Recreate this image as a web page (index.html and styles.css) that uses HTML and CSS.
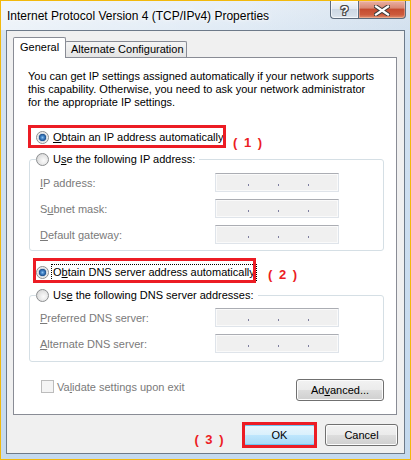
FILE: index.html
```html
<!DOCTYPE html>
<html>
<head>
<meta charset="utf-8">
<link rel="stylesheet" href="styles.css">
</head>
<body>
<div class="window">
  <div class="titlebar">
    <span class="title">Internet Protocol Version 4 (TCP/IPv4) Properties</span>
    <div class="caption">
      <div class="cbtn help"><span class="qmark">?</span></div>
      <div class="cbtn close">
        <svg width="16" height="11" viewBox="0 0 16 11">
          <path d="M2 1.5 L14 9.5 M14 1.5 L2 9.5" stroke="#3b3b3b" stroke-width="4.2" stroke-linecap="square" fill="none"/>
          <path d="M2 1.5 L14 9.5 M14 1.5 L2 9.5" stroke="#ffffff" stroke-width="2.2" stroke-linecap="square" fill="none"/>
        </svg>
      </div>
    </div>
  </div>
  <div class="client">
    <div class="tabs">
      <div class="tab active">General</div>
      <div class="tab inactive">Alternate Configuration</div>
    </div>
    <div class="panel">
      <p class="desc">You can get IP settings assigned automatically if your network supports<br>this capability. Otherwise, you need to ask your network administrator<br>for the appropriate IP settings.</p>

      <div class="opt opt1">
        <span class="radio on"></span>
        <span class="lbl"><u>O</u>btain an IP address automatically</span>
        <span class="mark mark1"></span>
        <span class="note note1">( 1 )</span>
      </div>

      <fieldset class="group group1">
        <legend><span class="radio"></span><span class="lbl">U<u>s</u>e the following IP address:</span></legend>
        <div class="frow"><span class="flabel"><u>I</u>P address:</span><span class="ipfield"><i></i><i></i><i></i></span></div>
        <div class="frow"><span class="flabel">S<u>u</u>bnet mask:</span><span class="ipfield"><i></i><i></i><i></i></span></div>
        <div class="frow"><span class="flabel"><u>D</u>efault gateway:</span><span class="ipfield"><i></i><i></i><i></i></span></div>
      </fieldset>

      <div class="opt opt2">
        <span class="radio on"></span>
        <span class="lbl focus">O<u>b</u>tain DNS server address automatically</span>
        <span class="mark mark2"></span>
        <span class="note note2">( 2 )</span>
      </div>

      <fieldset class="group group2">
        <legend><span class="radio"></span><span class="lbl">Us<u>e</u> the following DNS server addresses:</span></legend>
        <div class="frow"><span class="flabel"><u>P</u>referred DNS server:</span><span class="ipfield"><i></i><i></i><i></i></span></div>
        <div class="frow"><span class="flabel"><u>A</u>lternate DNS server:</span><span class="ipfield"><i></i><i></i><i></i></span></div>
      </fieldset>

      <div class="foot">
        <div class="check"><span class="box"></span><span class="clabel">Va<u>l</u>idate settings upon exit</span></div>
        <div class="btn adv">Ad<u>v</u>anced...</div>
      </div>
    </div>
    <div class="actions">
      <span class="note note3">( 3 )</span>
      <div class="okwrap"><div class="btn ok">OK</div><span class="mark mark3"></span></div>
      <div class="btn cancel">Cancel</div>
    </div>
  </div>
</div>
</body>
</html>
```
FILE: styles.css
```css
body {
  margin: 0;
  font-family: "Liberation Sans", Arial, sans-serif;
  font-size: 11px;
  color: #000;
}

.window {
  width: 411px;
  height: 460px;
  box-sizing: border-box;
  border: 1px solid #f2b90c;
  background: linear-gradient(180deg, #e3ecf5 0, #d3e2f1 40px, #c4d9ee 100%);
  display: flex;
  flex-direction: column;
}

.titlebar {
  height: 29px;
  flex: none;
  display: flex;
  justify-content: space-between;
  background: linear-gradient(90deg, rgba(255,255,255,0.55) 0, rgba(255,255,255,0.2) 60%, rgba(200,215,230,0.3) 100%);
}

.title {
  font-size: 12px;
  padding-left: 6px;
  align-self: center;
  text-shadow: 0 0 6px #fff, 0 0 3px #fff;
}

.caption {
  display: flex;
  height: 18px;
  margin-right: 4px;
}

.cbtn {
  height: 18px;
  box-sizing: border-box;
  border: 1px solid #5c6b7c;
  border-top: none;
  display: flex;
  align-items: center;
  justify-content: center;
}

.help {
  width: 28px;
  border-right: none;
  border-radius: 0 0 0 4px;
  background: linear-gradient(180deg, #f4f7fa 0, #e1e8f0 45%, #cdd8e4 50%, #d6e0ea 85%, #e4ebf2 100%);
  box-shadow: inset 0 0 0 1px rgba(255,255,255,0.6);
}

.qmark {
  font-weight: bold;
  font-size: 13px;
  color: #fff;
  margin-top: 1px;
  text-shadow: 1px 0 0 #4a4a4a, -1px 0 0 #4a4a4a, 0 1px 0 #4a4a4a, 0 -1px 0 #4a4a4a, 1px 1px 0 #4a4a4a, -1px -1px 0 #4a4a4a, 1px -1px 0 #4a4a4a, -1px 1px 0 #4a4a4a;
}

.close {
  width: 48px;
  border-radius: 0 0 4px 0;
  background: linear-gradient(180deg, #eab1a3 0, #d98a76 40%, #c54c30 50%, #cd5a3c 80%, #e08c6c 100%);
  box-shadow: inset 0 0 0 1px rgba(255,220,200,0.4);
}

.close svg {
  margin-top: 1px;
}

.client {
  flex: 1;
  margin: 0 5px 5px;
  border: 1px solid #6d7a89;
  background: #f0f0f0;
  display: flex;
  flex-direction: column;
}

.tabs {
  flex: none;
  height: 20px;
  margin: 6px 0 0 6px;
  display: flex;
  align-items: flex-end;
}

.tab {
  box-sizing: border-box;
  border: 1px solid #898c95;
  border-bottom: none;
  border-radius: 2px 2px 0 0;
  white-space: nowrap;
}

.tab.active {
  width: 53px;
  height: 21px;
  margin-bottom: -1px;
  padding-left: 6px;
  line-height: 19px;
  background: #fff;
  position: relative;
  z-index: 1;
}

.tab.inactive {
  width: 122px;
  height: 16px;
  margin-left: -1px;
  padding-left: 5px;
  line-height: 15px;
  background: linear-gradient(180deg, #f4f4f4, #e4e4e4);
}

.panel {
  flex: 1;
  margin: 0 7px 0 6px;
  border: 1px solid #898c95;
  background: #fff;
  padding-top: 12px;
  display: flex;
  flex-direction: column;
}

.desc {
  margin: 0 0 0 14px;
  line-height: 13px;
  white-space: nowrap;
}

.opt {
  position: relative;
  display: flex;
  align-items: center;
  height: 17px;
  margin-left: 22px;
}

.opt1 { margin-top: 20px; }
.opt2 { margin-top: 13px; }

.radio {
  flex: none;
  width: 13px;
  height: 13px;
  box-sizing: border-box;
  border-radius: 50%;
  border: 1px solid #8c8e90;
  background: radial-gradient(circle at 60% 60%, #fbfbfb 0, #e8e8e8 45%, #cdcdcd 100%);
}

.radio.on {
  background: radial-gradient(circle at 50% 50%, #8cc2ef 0, #4585c8 1.6px, #1f528f 3.4px, #cfd6de 4px, #eeeeee 5px, #fafafa 100%);
}

.lbl {
  margin-left: 3px;
  padding: 0 1px;
  line-height: 15px;
  white-space: nowrap;
}

.lbl.focus {
  outline: 1px dotted #000;
}

.mark {
  position: absolute;
  box-sizing: border-box;
  border: 3px solid #ec1c24;
}

.mark1 { left: -8px; top: -4px; width: 198px; height: 23px; }
.mark2 { left: -3px; top: -6px; width: 223px; height: 25px; }

.note {
  font-family: "Liberation Sans", Arial, sans-serif;
  font-weight: bold;
  font-size: 13px;
  letter-spacing: 1.5px;
  line-height: 16px;
  color: #ec1c24;
  white-space: nowrap;
}

.note1 { position: absolute; left: 197px; top: 6px; }
.note2 { position: absolute; left: 232px; top: 3px; }

.group {
  margin: 5px 12px 0 15px;
  border: 1px solid #d5dfe5;
  border-radius: 3px;
  padding: 5px 0 6px 6px;
  min-width: 0;
}

.group2 {
  margin-top: 6px;
  padding-top: 4px;
  padding-bottom: 8px;
}

.group legend {
  display: flex;
  align-items: center;
  height: 17px;
  padding: 0 3px 0 0;
  background: #fff;
}

.frow {
  display: flex;
  align-items: center;
  height: 19px;
  margin-left: 4px;
}

.frow + .frow { margin-top: 7px; }

.flabel {
  width: 175px;
  flex: none;
  color: #7a7a7a;
  white-space: nowrap;
}

.ipfield {
  width: 124px;
  height: 19px;
  box-sizing: border-box;
  border: 1px solid #dfe4ea;
  border-top-color: #abadb3;
  background: #f0f0f0;
  box-shadow: inset 0 0 0 1px #fafafa;
  display: flex;
  align-items: flex-end;
  gap: 29px;
  padding: 0 0 5px 32px;
}

.ipfield i {
  width: 1px;
  height: 2px;
  background: #7d7d9e;
}

.foot {
  margin-top: 17px;
  display: flex;
  justify-content: space-between;
  align-items: flex-start;
  padding: 0 12px 0 27px;
}

.check {
  display: flex;
  align-items: center;
  margin-top: 1px;
  height: 13px;
}

.box {
  width: 13px;
  height: 13px;
  box-sizing: border-box;
  border: 1px solid #bcbcbc;
  background: #f4f4f4;
}

.clabel {
  margin-left: 3px;
  color: #7a7a7a;
  white-space: nowrap;
}

.btn {
  height: 22px;
  box-sizing: border-box;
  border: 1px solid #707070;
  border-radius: 3px;
  background: linear-gradient(180deg, #f2f2f2 0, #ebebeb 50%, #dddddd 51%, #cfcfcf 100%);
  box-shadow: inset 0 0 0 1px #fcfcfc;
  display: flex;
  align-items: center;
  justify-content: center;
  white-space: nowrap;
}

.adv { width: 88px; }

.actions {
  flex: none;
  height: 22px;
  margin: 9px 6px 7px 0;
  display: flex;
  justify-content: flex-end;
  align-items: flex-start;
}

.note3 {
  margin: 8px 18px 0 0;
}

.okwrap {
  position: relative;
}

.ok {
  width: 73px;
  border-color: #3c7fb1;
  background: linear-gradient(180deg, #eaf6fd 0, #d9f0fc 50%, #bee6fd 51%, #a7d9f5 100%);
  box-shadow: inset 0 0 0 1px #6fc4f0;
}

.mark3 { top: -2px; bottom: -2px; left: -1px; right: -1px; }

.cancel {
  width: 73px;
  margin-left: 9px;
}
```
